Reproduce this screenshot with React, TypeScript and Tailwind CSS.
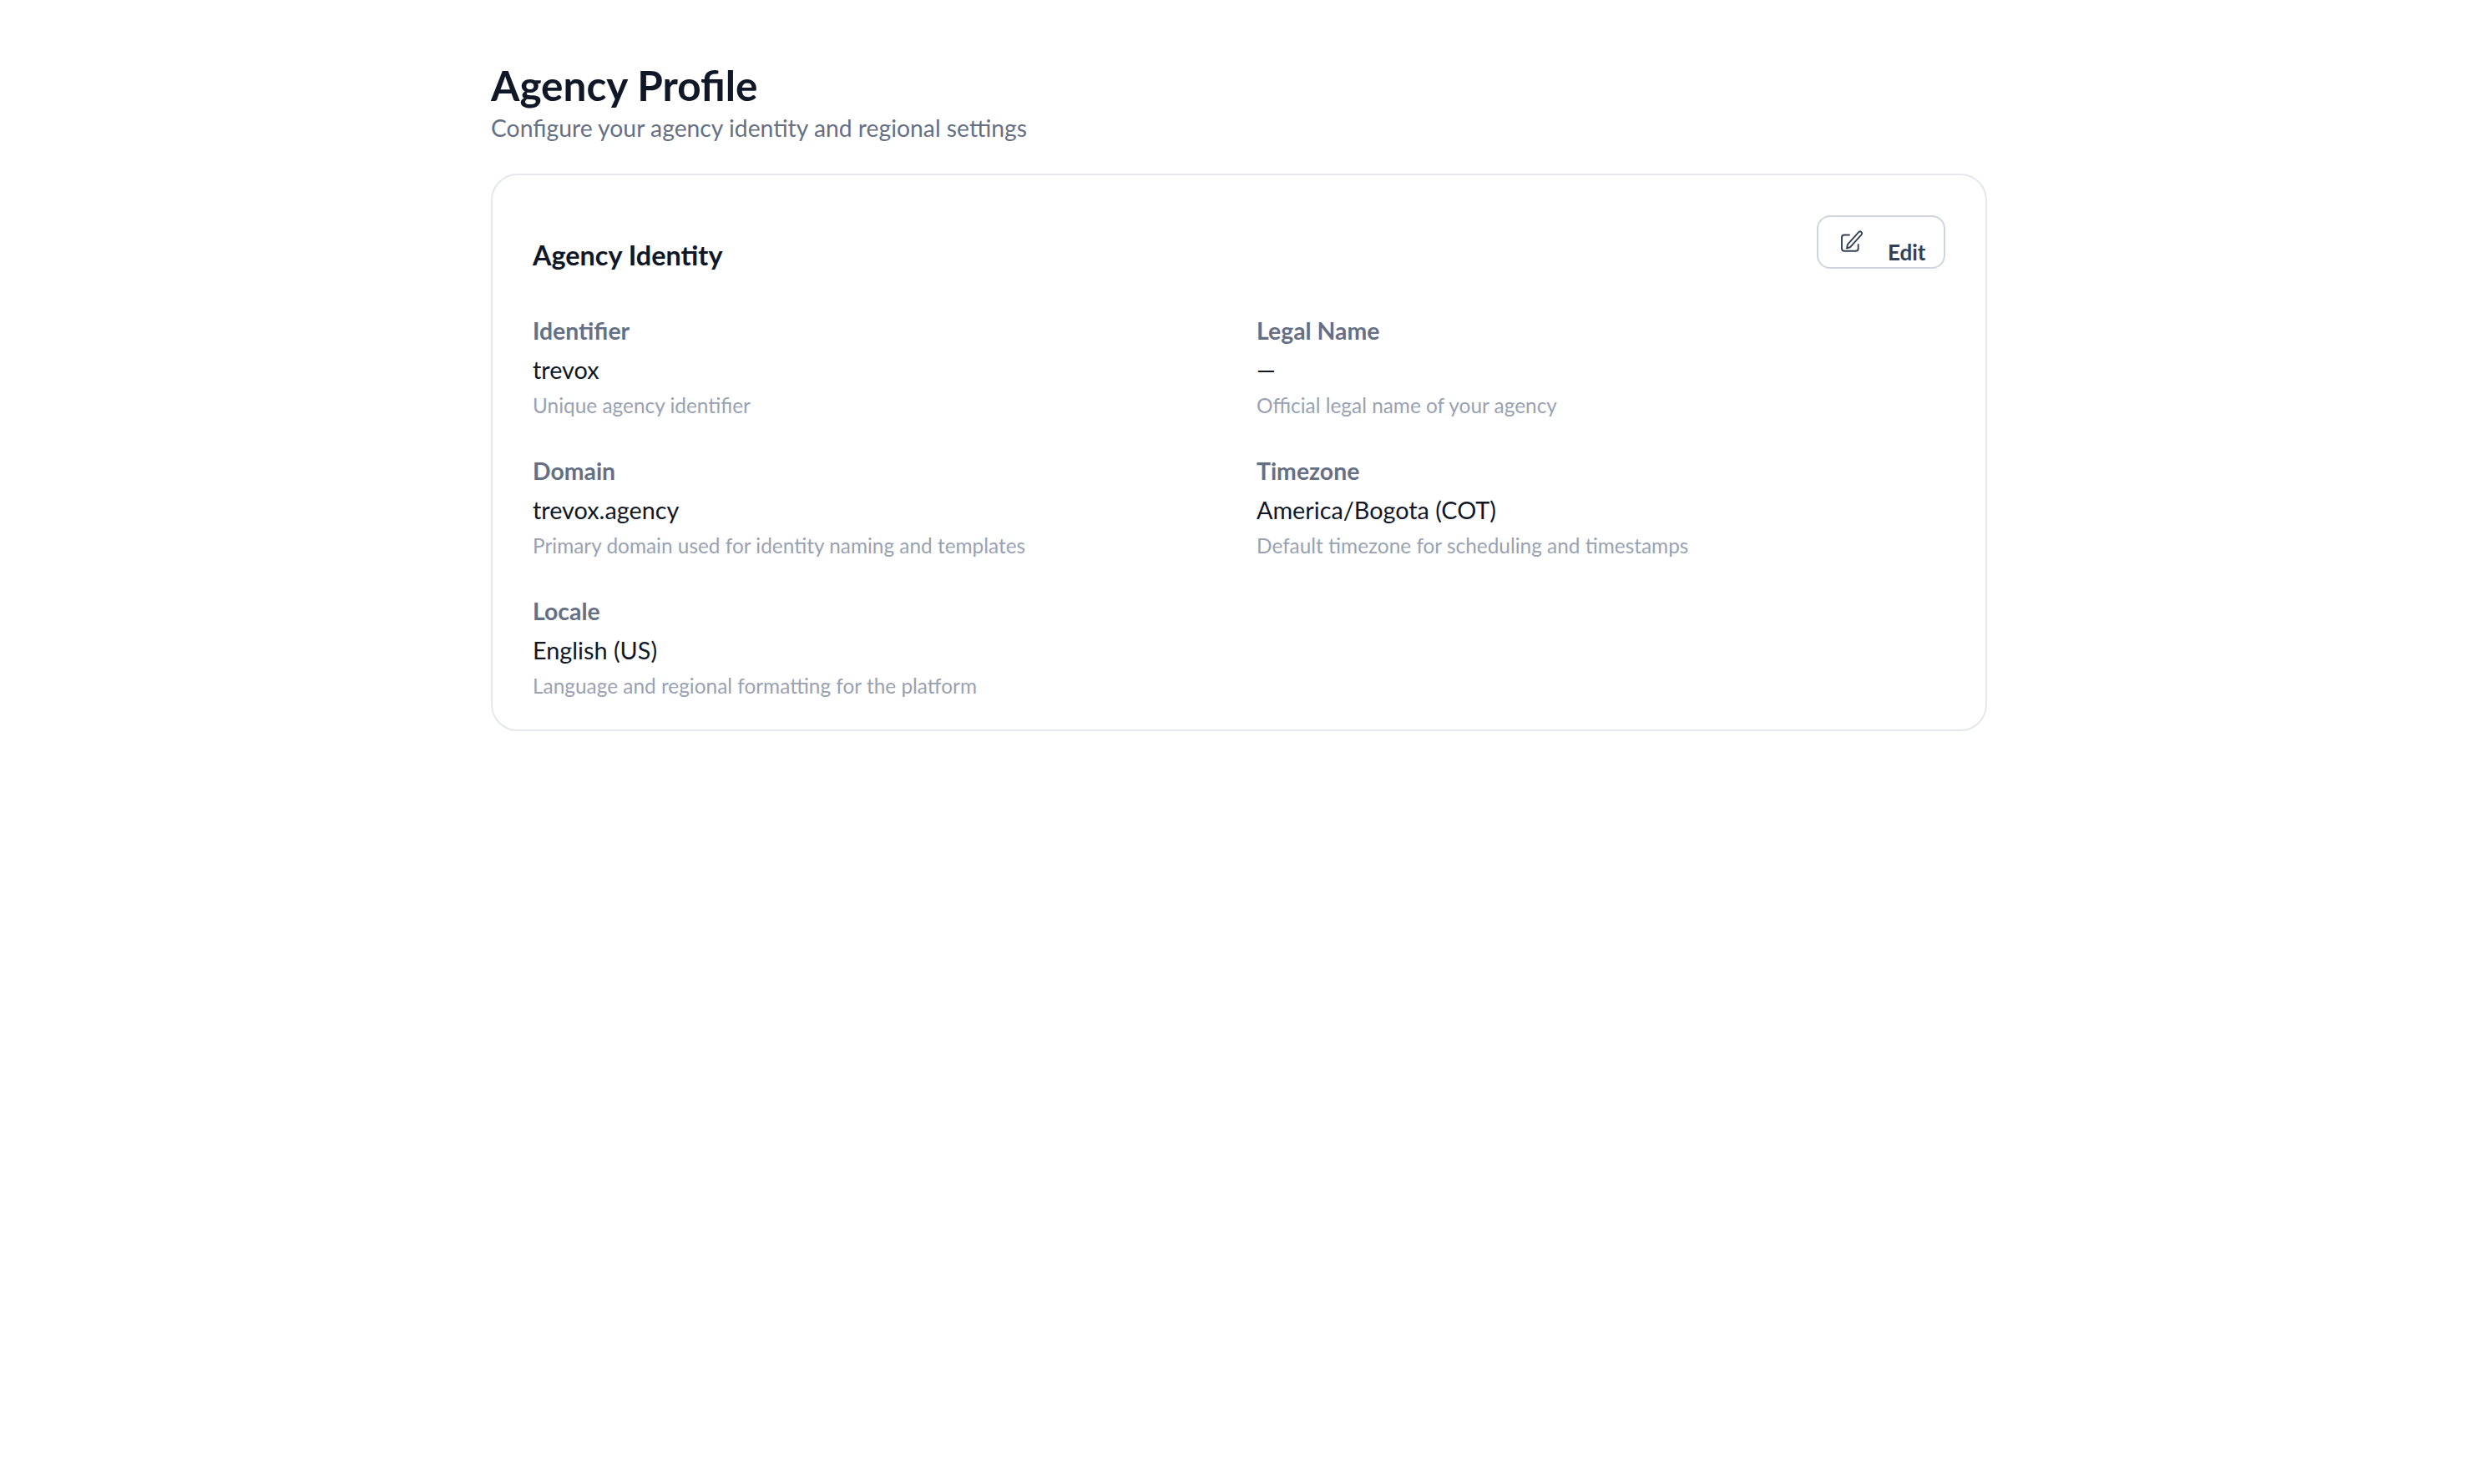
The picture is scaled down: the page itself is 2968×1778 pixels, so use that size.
const fields = [
  { label: "Identifier", value: "trevox", hint: "Unique agency identifier" },
  { label: "Legal Name", value: "—", hint: "Official legal name of your agency" },
  { label: "Domain", value: "trevox.agency", hint: "Primary domain used for identity naming and templates" },
  { label: "Timezone", value: "America/Bogota (COT)", hint: "Default timezone for scheduling and timestamps" },
  { label: "Locale", value: "English (US)", hint: "Language and regional formatting for the platform" },
]

function EditIcon() {
  return (
    <svg viewBox="0 0 28 28" fill="none" stroke="currentColor" strokeWidth={1.9} strokeLinecap="round" strokeLinejoin="round" className="h-[28px] w-[28px] shrink-0">
      <path d="M11 5.5H5A3 3 0 0 0 2 8.5V21.7A3 3 0 0 0 5 24.7H18.7A3 3 0 0 0 21.7 21.7V17" />
      <path d="M8 21.5L8.95 16.95L22.45 1.95A2.2 2.2 0 0 1 25.55 5.05L12.05 20.05Z" />
    </svg>
  )
}

export default function App() {
  return (
    <div className="min-h-screen bg-white font-['Lato','Liberation_Sans',sans-serif]">
      <div className="mx-auto w-[1792px] pt-[71px]">
        {/* Page heading */}
        <h1 className="text-[49.5px] leading-[62px] font-bold text-[#101828]">Agency Profile</h1>
        <p className="text-[28.3px] leading-[40px] text-[#667085]">Configure your agency identity and regional settings</p>

        {/* Identity card */}
        <div className="mt-[35px] rounded-[32px] border-2 border-[#e4e7ec] px-[48px] pt-[48px] pb-[35px]">
          <div className="flex items-start justify-between">
            <h2 className="pt-[12px] text-[32.4px] leading-[72px] font-bold text-[#101828]">Agency Identity</h2>
            <button className="flex h-[64px] w-[154px] items-center gap-[29px] rounded-[16px] border-2 border-[#d0d5dd] px-[26px] text-[#344054]">
              <EditIcon />
              <span className="pt-[24px] text-[26px] leading-[36px] font-bold">Edit</span>
            </button>
          </div>

          <div className="mt-[34px] grid grid-cols-2 gap-x-[42px] gap-y-[41px]">
            {fields.map((f) => (
              <div key={f.label}>
                <div className="text-[28.4px] leading-[40px] font-bold text-[#667085]">{f.label}</div>
                <div className="mt-[7px] text-[28.8px] leading-[40px] text-[#101828]">{f.value}</div>
                <div className="mt-[6px] text-[24.4px] leading-[34px] text-[#98a2b3]">{f.hint}</div>
              </div>
            ))}
          </div>
        </div>
      </div>
    </div>
  )
}
